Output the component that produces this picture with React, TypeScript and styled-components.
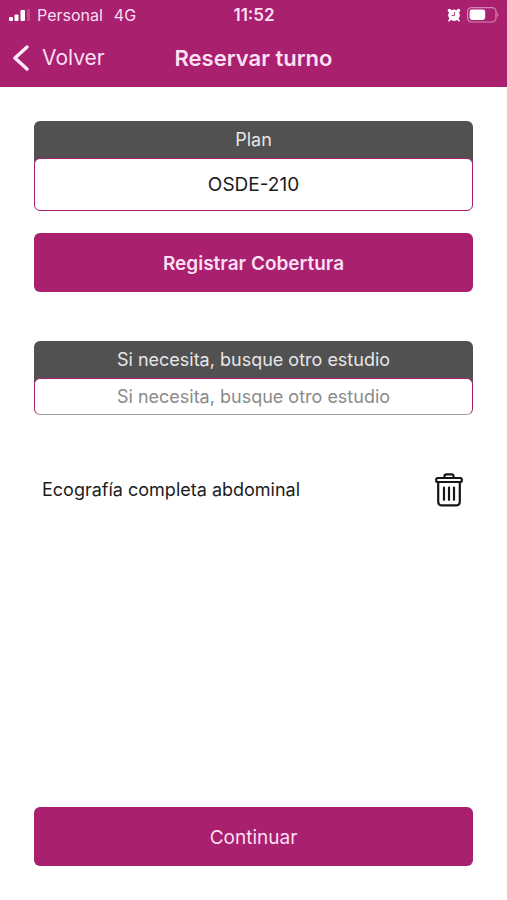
import React, { useState } from "react";
import styled, { createGlobalStyle } from "styled-components";

const brand = "#a8206e";
const slate = "#515151";
const blush = "#fbdff3";

const GlobalStyle = createGlobalStyle`
  *, *::before, *::after { box-sizing: border-box; }
  body {
    margin: 0;
    background: #fff;
    color: #1c1c1c;
    font-family: Inter, Roboto, "Liberation Sans", sans-serif;
  }
  button, input, select { font: inherit; color: inherit; margin: 0; }
`;

const Screen = styled.div`
  display: flex;
  flex-direction: column;
  min-height: 100vh;
`;

const Header = styled.header`
  background: ${brand};
  color: ${blush};
`;

const ThreeColumns = styled.div`
  display: grid;
  grid-template-columns: 1fr auto 1fr;
  align-items: center;
`;

const StatusBar = styled(ThreeColumns)`
  height: 29px;
  padding: 0 8px 0 9px;
  font-size: 16px;
  line-height: 20px;
`;

const Carrier = styled.div`
  display: flex;
  align-items: center;
  gap: 7px;
`;

const Network = styled.span`
  margin-left: 4px;
`;

const Clock = styled.time`
  font-size: 17px;
  font-weight: 600;
`;

const Indicators = styled.div`
  display: flex;
  align-items: center;
  justify-content: flex-end;
  gap: 6px;
`;

const NavBar = styled(ThreeColumns)`
  height: 58px;
  padding: 0 12px;
`;

const BackButton = styled.button`
  display: flex;
  align-items: center;
  gap: 13px;
  justify-self: start;
  padding: 0;
  border: 0;
  background: none;
  font-size: 21px;
  line-height: 28px;
  cursor: pointer;
`;

const Title = styled.h1`
  margin: 0;
  font-size: 22px;
  line-height: 28px;
  font-weight: 600;
`;

const Content = styled.main`
  display: flex;
  flex: 1;
  flex-direction: column;
  padding: 34px;
`;

const Field = styled.div<{ $spaced?: boolean }>`
  display: flex;
  flex-direction: column;
  margin-top: ${(p) => (p.$spaced ? "49px" : "0")};
`;

const FieldLabel = styled.label`
  height: 44px;
  padding-top: 7px;
  border-radius: 6px 6px 0 0;
  background: ${slate};
  color: #e6e6e6;
  font-size: 18px;
  line-height: 24px;
  text-align: center;
`;

const Plan = styled.select`
  appearance: none;
  width: 100%;
  height: 53px;
  margin-top: -7px;
  padding: 0 8px;
  border: 1px solid ${brand};
  border-radius: 6px;
  background: #fff;
  font-size: 19px;
  text-align: center;
  text-align-last: center;
`;

const Search = styled.input`
  width: 100%;
  height: 37px;
  margin-top: -7px;
  padding: 0 8px;
  border: 1px solid ${brand};
  border-bottom-color: #a0a0a0;
  border-radius: 6px;
  background: #fff;
  font-size: 18px;
  text-align: center;

  &::placeholder {
    color: #8a8a8a;
    opacity: 1;
  }
`;

const Action = styled.button<{ $strong?: boolean }>`
  width: 100%;
  height: 59px;
  padding: 1px 0 0;
  border: 0;
  border-radius: 6px;
  background: ${brand};
  color: ${blush};
  font-size: 19px;
  font-weight: ${(p) => (p.$strong ? 600 : 400)};
  cursor: pointer;
`;

const RegisterAction = styled(Action)`
  margin-top: 22px;
`;

const Studies = styled.ul`
  flex: 1;
  margin: 58px 0 0;
  padding: 0 10px 0 8px;
  list-style: none;
`;

const Study = styled.li`
  display: flex;
  align-items: center;
  justify-content: space-between;
  font-size: 18px;
  line-height: 24px;
`;

const DeleteButton = styled.button`
  display: flex;
  padding: 0;
  border: 0;
  background: none;
  cursor: pointer;
`;

const SignalIcon = () => (
  <svg width="21" height="12" viewBox="0 0 21 12" fill="#fff" aria-hidden="true">
    <rect x="0" y="8" width="4" height="4" rx="1" />
    <rect x="5.5" y="5.5" width="4" height="6.5" rx="1" />
    <rect x="11.5" y="1" width="4.5" height="11" rx="1" />
    <rect x="18" y="0" width="3" height="12" rx="1" opacity="0.2" />
  </svg>
);

const AlarmIcon = () => (
  <svg width="14" height="14" viewBox="0 0 14 14" fill="#fff" aria-hidden="true">
    <circle cx="7" cy="7.2" r="5.8" />
    <circle cx="2.4" cy="2.4" r="1.7" />
    <circle cx="11.6" cy="2.4" r="1.7" />
    <path d="M3.2 11 2 12.8M10.8 11l1.2 1.8" stroke="#fff" strokeWidth="1.6" strokeLinecap="round" />
    <path d="M7.4 4.4v3.2H5" fill="none" stroke={brand} strokeWidth="0.9" strokeLinecap="round" />
  </svg>
);

const BatteryIcon = () => (
  <svg width="32" height="16" viewBox="0 0 32 16" aria-hidden="true">
    <rect x="0.6" y="0.6" width="28.4" height="14.4" rx="4" fill="none" stroke="#d884b8" strokeWidth="1.2" />
    <rect x="2.6" y="2.6" width="15.6" height="10.4" rx="2.4" fill="#fff" />
    <path d="M30.2 5.4c1.6.8 1.6 4 0 4.8z" fill="#d884b8" />
  </svg>
);

const ChevronIcon = () => (
  <svg width="17" height="26" viewBox="0 0 17 26" fill="none" aria-hidden="true">
    <path d="M15 2 3 13l12 11" stroke="#ffe9fa" strokeWidth="3.4" strokeLinecap="round" strokeLinejoin="round" />
  </svg>
);

const TrashIcon = () => (
  <svg
    width="28"
    height="34"
    viewBox="0 0 28 34"
    fill="none"
    stroke="#161616"
    strokeWidth="2.2"
    strokeLinecap="round"
    strokeLinejoin="round"
    aria-hidden="true"
  >
    <path d="M9.5 5V3.2Q9.5 1.4 11.3 1.4h5.4q1.8 0 1.8 1.8V5" />
    <rect x="1.2" y="5" width="25.6" height="4" rx="1.6" />
    <path d="M3.2 9.2v19.2q0 4 4 4h13.6q4 0 4-4V9.2" />
    <path d="M9 14.5v12.3M14 14.5v12.3M19 14.5v12.3" />
  </svg>
);

export default function App() {
  const [query, setQuery] = useState("");
  const [studies, setStudies] = useState(["Ecografía completa abdominal"]);

  return (
    <>
      <GlobalStyle />
      <Screen>
        <Header>
          <StatusBar>
            <Carrier>
              <SignalIcon />
              <span>Personal</span>
              <Network>4G</Network>
            </Carrier>
            <Clock>11:52</Clock>
            <Indicators>
              <AlarmIcon />
              <BatteryIcon />
            </Indicators>
          </StatusBar>
          <NavBar>
            <BackButton type="button">
              <ChevronIcon />
              Volver
            </BackButton>
            <Title>Reservar turno</Title>
          </NavBar>
        </Header>
        <Content>
          <Field>
            <FieldLabel htmlFor="plan">Plan</FieldLabel>
            <Plan id="plan" defaultValue="OSDE-210">
              <option value="OSDE-210">OSDE-210</option>
            </Plan>
          </Field>
          <RegisterAction type="button" $strong>
            Registrar Cobertura
          </RegisterAction>
          <Field $spaced>
            <FieldLabel htmlFor="study">Si necesita, busque otro estudio</FieldLabel>
            <Search
              id="study"
              type="text"
              placeholder="Si necesita, busque otro estudio"
              value={query}
              onChange={(e) => setQuery(e.target.value)}
            />
          </Field>
          <Studies>
            {studies.map((name) => (
              <Study key={name}>
                <span>{name}</span>
                <DeleteButton
                  type="button"
                  aria-label={`Eliminar ${name}`}
                  onClick={() => setStudies(studies.filter((s) => s !== name))}
                >
                  <TrashIcon />
                </DeleteButton>
              </Study>
            ))}
          </Studies>
          <Action type="button">Continuar</Action>
        </Content>
      </Screen>
    </>
  );
}
